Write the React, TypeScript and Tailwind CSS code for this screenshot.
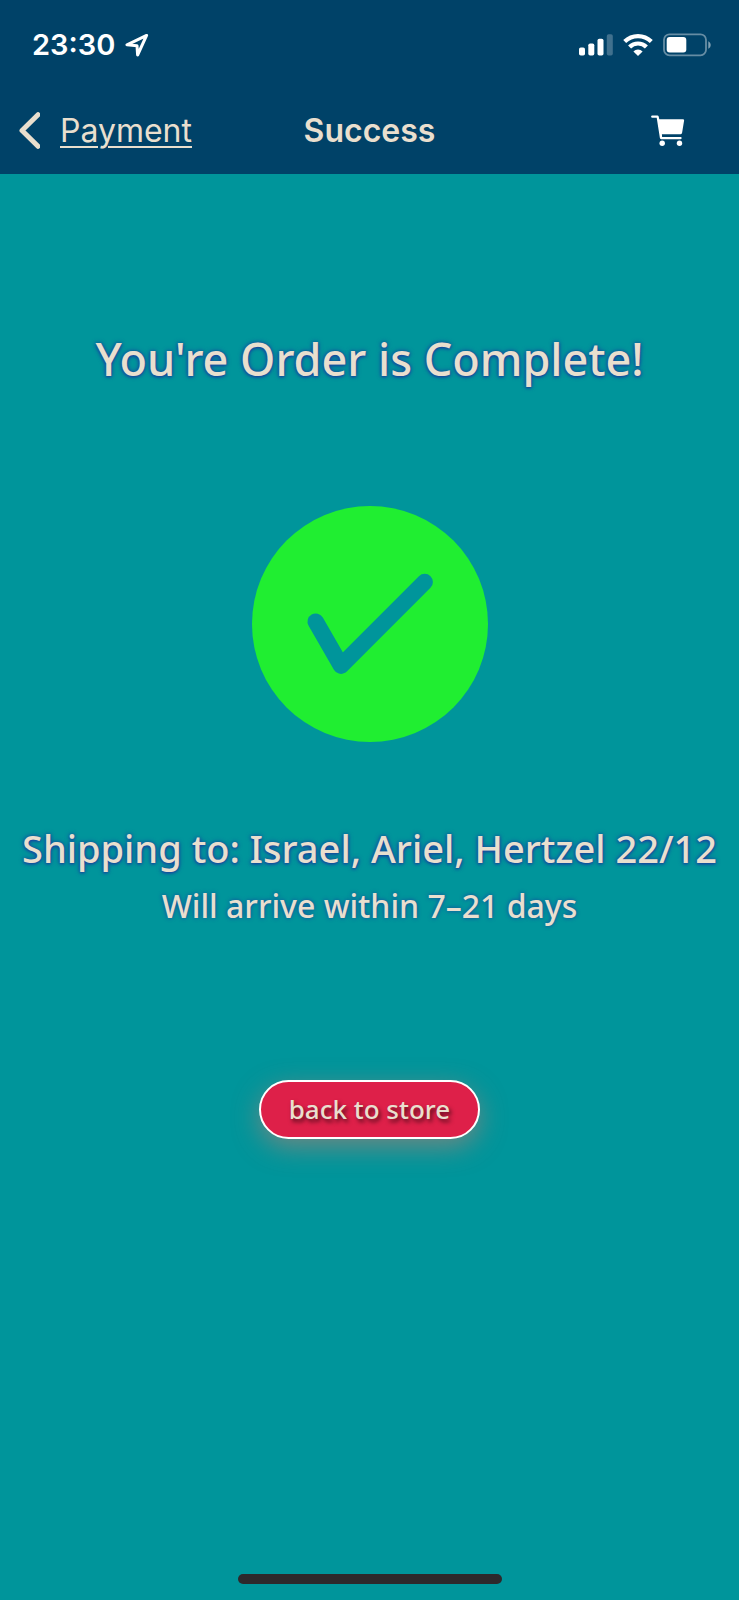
function LocationArrow() {
  return (
    <svg width="24" height="24" viewBox="0 0 24 24" fill="none" stroke="white" strokeWidth="3" strokeLinejoin="round" aria-hidden="true">
      <path d="M21.6 2.4 2 11.8l10 .9.6 9.3Z" />
    </svg>
  );
}

function Signal() {
  return (
    <svg width="34" height="22" viewBox="0 0 34 22" fill="white" aria-hidden="true">
      <rect x="0" y="13.5" width="6" height="8" rx="1.8" />
      <rect x="9.3" y="9.5" width="6" height="12" rx="1.8" />
      <rect x="18.5" y="4.7" width="6" height="16.8" rx="1.8" />
      <rect x="27.8" y="0.3" width="6" height="21.2" rx="1.8" opacity="0.25" />
    </svg>
  );
}

function Wifi() {
  return (
    <svg width="30" height="22" viewBox="0 0 30 22" fill="none" stroke="white" strokeWidth="4.2" aria-hidden="true">
      <path d="M1.7 7.6a19 19 0 0 1 26.6 0" />
      <path d="M6.6 13a11.8 11.8 0 0 1 16.8 0" />
      <path d="M15 22l-4.6-4.6a6.6 6.6 0 0 1 9.2 0Z" fill="white" stroke="none" />
    </svg>
  );
}

function Battery() {
  return (
    <svg width="48" height="24" viewBox="0 0 48 24" aria-hidden="true">
      <rect x="1" y="1.3" width="42" height="21" rx="5.5" fill="none" stroke="white" strokeOpacity="0.4" strokeWidth="1.8" />
      <rect x="3.7" y="4" width="19.6" height="15.6" rx="3" fill="white" />
      <path d="M45.3 8.2c3.2 1.6 3.2 6 0 7.6Z" fill="white" opacity="0.5" />
    </svg>
  );
}

function Cart() {
  return (
    <svg width="34" height="32" viewBox="0 0 34 32" fill="currentColor" aria-hidden="true">
      <path d="M1.3 .4H6.4c.7 0 1.1.4 1.3 1l.6 2.8h23.6c.8 0 1.3.6 1.2 1.4l-2 12.2c-.1.8-.7 1.4-1.5 1.4H10.9l.2 2.8h18.4c.7 0 1.2.5 1.2 1.1s-.5 1.2-1.2 1.2H10.2c-.7 0-1.2-.5-1.3-1.2L5.7 2.8H1.3A1.2 1.2 0 0 1 1.3 .4Z" />
      <circle cx="11.2" cy="28.2" r="2.7" />
      <circle cx="28.5" cy="28.2" r="2.7" />
    </svg>
  );
}

function Check() {
  return (
    <svg width="236" height="236" viewBox="0 0 236 236" role="img" aria-label="Order complete">
      <circle cx="118" cy="118" r="118" fill="#20ee31" />
      <path d="M63.7 115.7 89 159.7 172.7 76" fill="none" stroke="#00959b" strokeWidth="16.4" strokeLinecap="round" strokeLinejoin="round" />
    </svg>
  );
}

export default function App() {
  return (
    <div className="flex min-h-screen flex-col bg-[#00959b] font-['Noto_Sans',sans-serif] text-[#e9dfce]">
      <header className="bg-[#004268] pb-0.5 font-['Inter',sans-serif]">
        <div className="flex h-[90px] items-center justify-between pr-7 pl-8 text-white">
          <div className="flex items-center gap-2.5">
            <span className="text-[29px] font-semibold">23:30</span>
            <LocationArrow />
          </div>
          <div className="flex items-center gap-2.5">
            <Signal />
            <Wifi />
            <Battery />
          </div>
        </div>
        <nav className="grid h-[82px] grid-cols-[1fr_auto_1fr] items-center px-[18px]">
          <a href="#payment" className="flex items-center gap-5 text-[32px]">
            <svg width="22" height="38" viewBox="0 0 22 38" fill="none" stroke="currentColor" strokeWidth="5" strokeLinecap="round" strokeLinejoin="round" aria-hidden="true">
              <path d="M20 2.7 4 18.5l16 15.8" />
            </svg>
            <span className="underline decoration-2 underline-offset-4">Payment</span>
          </a>
          <h1 className="text-[32px] font-semibold">Success</h1>
          <button type="button" aria-label="Cart" className="mr-9 justify-self-end text-white">
            <Cart />
          </button>
        </nav>
      </header>
      <main className="flex flex-1 flex-col items-center text-center">
        <h2 className="mt-[153px] text-[45px] leading-[64px] font-medium [text-shadow:0_0_5px_#17409e,0_1px_3px_#17409e]">You're Order is Complete!</h2>
        <div className="mt-[115px]">
          <Check />
        </div>
        <p className="mt-[78px] text-[38px] leading-[56px] font-medium whitespace-nowrap [text-shadow:0_0_5px_#17409e,0_1px_3px_#17409e]">Shipping to: Israel, Ariel, Hertzel 22/12</p>
        <p className="text-[32px] leading-[60px] font-medium [text-shadow:0_0_4px_#17409e]">Will arrive within 7–21 days</p>
        <button type="button" className="mt-[144px] h-[59px] rounded-full border-2 border-white bg-[#de2049] px-7 text-[26px] font-medium shadow-[0_8px_26px_#de7a6a80] [text-shadow:2px_3px_4px_#000000a0]">back to store</button>
      </main>
      <footer className="flex justify-center pb-4">
        <div className="h-[10px] w-[264px] rounded-full bg-[#2d292c]" />
      </footer>
    </div>
  );
}
